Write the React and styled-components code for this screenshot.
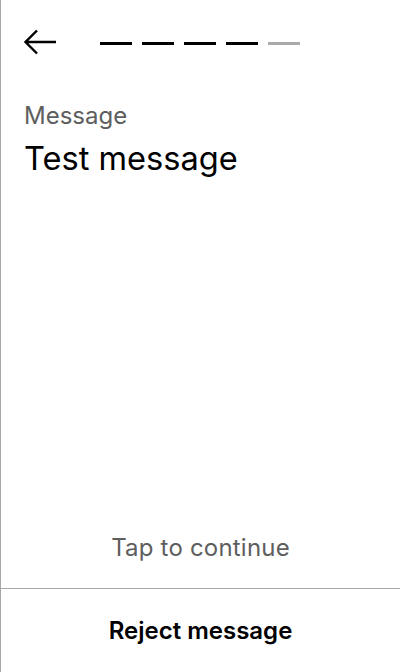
import React from 'react';
import styled, { createGlobalStyle } from 'styled-components';

const GlobalStyle = createGlobalStyle`
  html, body {
    margin: 0;
    padding: 0;
    background: #ffffff;
  }
  body {
    font-family: Inter, "Noto Sans", sans-serif;
    color: #000000;
  }
`;

const Screen = styled.div`
  width: 400px;
  height: 672px;
  box-sizing: border-box;
  border-left: 1px solid #a8a8a8;
  display: flex;
  flex-direction: column;
`;

const Header = styled.div`
  display: flex;
  align-items: center;
  height: 86px;
  padding: 0 23px;
  gap: 44px;
`;

const BackButton = styled.button`
  border: none;
  background: none;
  padding: 0;
  width: 32px;
  height: 28px;
  display: flex;
  align-items: center;
  cursor: pointer;
`;

const Progress = styled.div`
  display: flex;
  gap: 10px;
`;

const Dash = styled.span`
  width: 32px;
  height: 3px;
  background: ${({ done }) => (done ? '#000000' : '#aaaaaa')};
`;

const Body = styled.div`
  flex: 1;
  padding: 15px 23px 0;
  display: flex;
  flex-direction: column;
`;

const Label = styled.div`
  font-size: 24px;
  line-height: 30px;
  color: #5e5e5e;
`;

const Value = styled.div`
  font-size: 32.6px;
  line-height: 40px;
  margin-top: 7px;
`;

const Spacer = styled.div`
  flex: 1;
`;

const Hint = styled.div`
  text-align: center;
  font-size: 24px;
  line-height: 30px;
  letter-spacing: 0.2px;
  color: #5e5e5e;
  padding-bottom: 25px;
`;

const Footer = styled.button`
  height: 84px;
  border: none;
  border-top: 1px solid #a8a8a8;
  background: none;
  font-family: Inter, "Noto Sans", sans-serif;
  font-size: 24px;
  font-weight: 600;
  color: #000000;
  cursor: pointer;
`;

function BackArrow() {
  return (
    <svg width="32" height="28" viewBox="0 0 32 28" fill="none">
      <path d="M32 13H1.5M13 1.5L1.5 13L13 24.5" stroke="#000" strokeWidth="2.4" />
    </svg>
  );
}

export default function App() {
  const steps = [true, true, true, true, false];
  return (
    <>
      <GlobalStyle />
      <Screen>
        <Header>
          <BackButton aria-label="Back">
            <BackArrow />
          </BackButton>
          <Progress>
            {steps.map((done, i) => (
              <Dash key={i} done={done} />
            ))}
          </Progress>
        </Header>
        <Body>
          <Label>Message</Label>
          <Value>Test message</Value>
          <Spacer />
          <Hint>Tap to continue</Hint>
        </Body>
        <Footer>Reject message</Footer>
      </Screen>
    </>
  );
}
